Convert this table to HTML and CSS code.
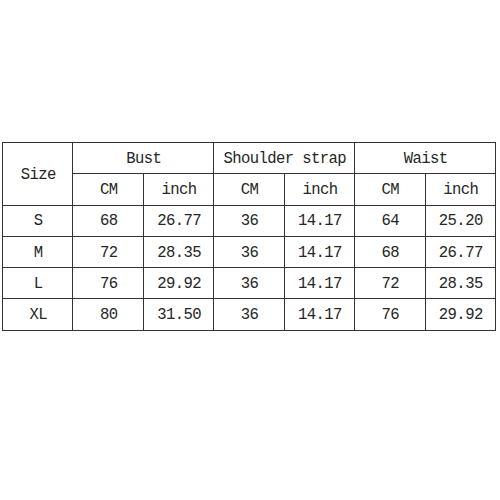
FILE: index.html
```html
<!DOCTYPE html>
<html>
<head>
<meta charset="utf-8">
<link rel="stylesheet" href="styles.css">
</head>
<body>
<div class="page">
<table class="size-table">
  <tr>
    <td rowspan="2">Size</td>
    <td colspan="2">Bust</td>
    <td colspan="2">Shoulder strap</td>
    <td colspan="2">Waist</td>
  </tr>
  <tr>
    <td>CM</td><td>inch</td>
    <td>CM</td><td>inch</td>
    <td>CM</td><td>inch</td>
  </tr>
  <tr>
    <td>S</td><td>68</td><td>26.77</td><td>36</td><td>14.17</td><td>64</td><td>25.20</td>
  </tr>
  <tr>
    <td>M</td><td>72</td><td>28.35</td><td>36</td><td>14.17</td><td>68</td><td>26.77</td>
  </tr>
  <tr>
    <td>L</td><td>76</td><td>29.92</td><td>36</td><td>14.17</td><td>72</td><td>28.35</td>
  </tr>
  <tr>
    <td>XL</td><td>80</td><td>31.50</td><td>36</td><td>14.17</td><td>76</td><td>29.92</td>
  </tr>
</table>
</div>
</body>
</html>
```

FILE: styles.css
```css
html, body {
  margin: 0;
  padding: 0;
  background: #ffffff;
}

.page {
  width: 500px;
  height: 500px;
  padding: 142px 0 0 2px;
  box-sizing: border-box;
}

.size-table {
  width: 494px;
  border-collapse: collapse;
  table-layout: fixed;
  font-family: "Liberation Mono", "DejaVu Sans Mono", monospace;
  font-size: 15.6px;
  letter-spacing: -0.6px;
  color: #262626;
}

.size-table tr {
  height: 31.3px;
}

.size-table td {
  border: 1px solid #333333;
  padding: 3px 0 0 1px;
  text-align: center;
  vertical-align: middle;
  white-space: nowrap;
  line-height: 1;
}
```
